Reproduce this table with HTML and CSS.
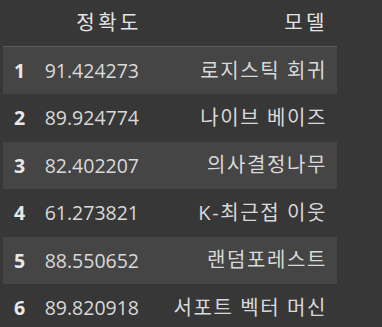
FILE: index.html
```html
<!DOCTYPE html>
<html lang="ko">
<head>
<meta charset="utf-8">
<link rel="stylesheet" href="styles.css">
</head>
<body>
<table class="df">
  <thead>
    <tr>
      <th class="idx"></th>
      <th class="num head">정확도</th>
      <th class="txt head">모델</th>
    </tr>
  </thead>
  <tbody>
    <tr class="odd"><th class="idx">1</th><td class="num">91.424273</td><td class="txt">로지스틱 회귀</td></tr>
    <tr><th class="idx">2</th><td class="num">89.924774</td><td class="txt">나이브 베이즈</td></tr>
    <tr class="odd"><th class="idx">3</th><td class="num">82.402207</td><td class="txt">의사결정나무</td></tr>
    <tr><th class="idx">4</th><td class="num">61.273821</td><td class="txt">K-최근접 이웃</td></tr>
    <tr class="odd"><th class="idx">5</th><td class="num">88.550652</td><td class="txt">랜덤포레스트</td></tr>
    <tr><th class="idx">6</th><td class="num">89.820918</td><td class="txt">서포트 벡터 머신</td></tr>
  </tbody>
</table>
</body>
</html>
```

FILE: styles.css
```css
html, body {
  margin: 0;
  padding: 0;
  background: #373737;
}

body {
  font-family: "Open Sans", "Noto Sans CJK KR", sans-serif;
  font-size: 19.5px;
  color: #d9d9d9;
}

.df {
  margin-left: 3px;
  border-collapse: collapse;
  border-spacing: 0;
  table-layout: fixed;
  width: 334px;
}

.df th,
.df td {
  padding: 0;
  white-space: nowrap;
  line-height: 1;
}

.df thead th {
  height: 46px;
  border-bottom: 1px solid #5c5c5c;
  font-weight: normal;
  color: #e4e4e4;
}

.df tbody th,
.df tbody td {
  height: 47.4px;
}

.df tr.odd {
  background: #454545;
}

.idx {
  width: 22px;
  padding-left: 11px !important;
  text-align: left;
  font-weight: bold;
  color: #e8e8e8;
}

.num {
  width: 106px;
  padding-right: 11px !important;
  text-align: right;
}

.txt {
  padding-right: 10px !important;
  text-align: right;
  font-size: 20px;
  letter-spacing: 1.6px;
}

.head {
  font-size: 20px;
  letter-spacing: 3.5px;
}

.num.head {
  padding-right: 8px !important;
}

.txt.head {
  padding-right: 9px !important;
}
```
